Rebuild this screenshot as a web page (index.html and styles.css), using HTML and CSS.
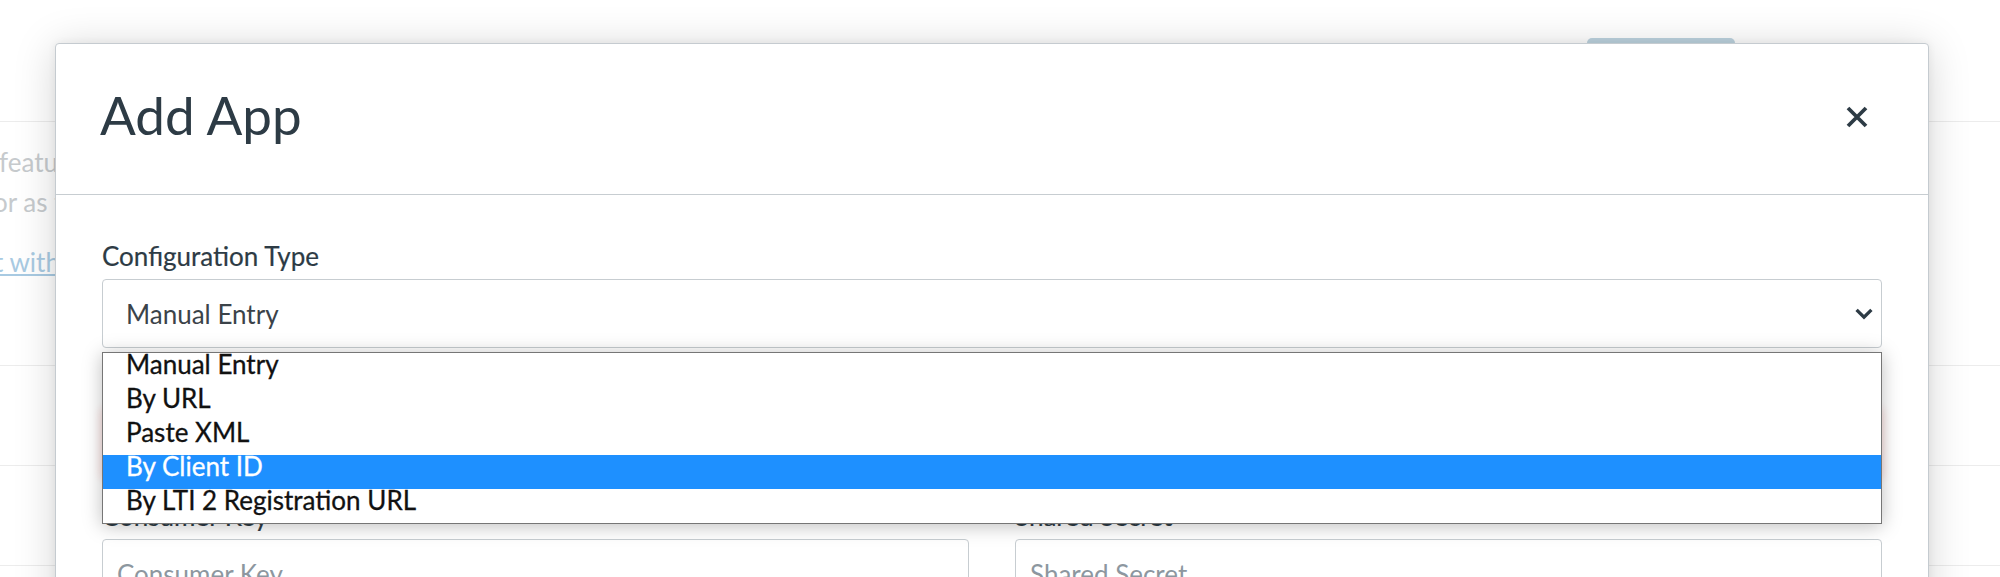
FILE: index.html
```html
<!DOCTYPE html>
<html lang="en">
<head>
<meta charset="utf-8">
<title>Add App</title>
<link rel="stylesheet" href="styles.css">
</head>
<body>
<div class="page" aria-hidden="true">
  <div class="page-bar"><span class="page-btn"></span></div>
  <div class="page-intro">
    <p class="page-text">features to Canvas that can be used in your courses</p>
    <p class="page-text line2">or as tools for your students.</p>
    <p class="page-text line3"><a class="page-link">t with Canvas</a></p>
  </div>
  <div class="page-row"></div>
  <div class="page-row"></div>
  <div class="page-row"></div>
</div>

<div class="modal" role="dialog" aria-labelledby="modal-title">
  <header class="modal-header">
    <h2 class="modal-title" id="modal-title">Add App</h2>
    <button class="close" type="button" aria-label="Close">
      <svg width="22" height="22" viewBox="0 0 22 22"><path d="M2 2 L20 20 M20 2 L2 20" fill="none" stroke="#2d3b45" stroke-width="3.8"/></svg>
    </button>
  </header>
  <div class="modal-body">
    <div class="field">
      <label class="label">Configuration Type</label>
      <div class="select-wrap">
        <div class="select">
          <span>Manual Entry</span>
          <svg class="chevron" width="18" height="12" viewBox="0 0 18 12"><path d="M1.6 1.8 L9 9.2 L16.4 1.8" fill="none" stroke="#2d3b45" stroke-width="3.3"/></svg>
        </div>
        <ul class="listbox" role="listbox">
          <li class="option" role="option">Manual Entry</li>
          <li class="option" role="option">By URL</li>
          <li class="option" role="option">Paste XML</li>
          <li class="option selected" role="option" aria-selected="true">By Client ID</li>
          <li class="option" role="option">By LTI 2 Registration URL</li>
        </ul>
      </div>
    </div>
    <div class="field">
      <label class="label">Name</label>
      <div class="input error"></div>
    </div>
    <div class="row">
      <div class="field">
        <label class="label">Consumer Key</label>
        <input class="input" placeholder="Consumer Key">
      </div>
      <div class="field">
        <label class="label">Shared Secret</label>
        <input class="input" placeholder="Shared Secret">
      </div>
    </div>
  </div>
</div>
</body>
</html>
```

FILE: styles.css
```css
html, body {
  margin: 0;
  padding: 0;
}
body {
  width: 2000px;
  height: 577px;
  overflow: hidden;
  background: #ffffff;
  font-family: Lato, "Open Sans", sans-serif;
  position: relative;
}

/* page behind the dialog (already dimmed by the overlay) */
.page {
  position: absolute;
  inset: 0;
  color: #c6cacd;
}
.page-bar {
  height: 121px;
  border-bottom: 1px solid #ececec;
  display: flex;
  justify-content: flex-end;
  padding-right: 265px;
}
.page-btn {
  display: block;
  width: 148px;
  height: 44px;
  margin-top: 38px;
  border-radius: 5px;
  background: #bed4e0;
}
.page-intro {
  height: 244px;
  border-bottom: 1px solid #ececec;
  padding-top: 20px;
  box-sizing: border-box;
}
.page-text {
  margin: 0;
  font-size: 26px;
  line-height: 40px;
  white-space: nowrap;
  margin-left: -1px;
}
.page-text.line2 {
  margin-left: -7px;
}
.page-text.line3 {
  margin-top: 20px;
  margin-left: -6px;
}
.page-link {
  color: #a8cae2;
  text-decoration: underline;
}
.page-row {
  height: 99px;
  border-bottom: 1px solid #ececec;
}

/* dialog */
.modal {
  position: absolute;
  left: 55px;
  top: 43px;
  width: 1874px;
  height: 640px;
  box-sizing: border-box;
  background: #ffffff;
  border: 1px solid #c5cbd0;
  border-radius: 4px;
  box-shadow: 0 4px 42px rgba(0, 0, 0, 0.17), 0 0 8px rgba(0, 0, 0, 0.06);
}
.modal-header {
  height: 151px;
  box-sizing: border-box;
  border-bottom: 1px solid #c7cdd1;
  padding: 0 61px 9px 44px;
  display: flex;
  align-items: center;
  justify-content: space-between;
}
.modal-title {
  margin: 0;
  font-size: 53px;
  line-height: 64px;
  font-weight: 400;
  color: #2d3b45;
}
.close {
  margin: 5px -1px 0 0;
  padding: 0;
  border: 0;
  background: none;
  width: 22px;
  height: 22px;
  display: block;
}
.close svg {
  display: block;
}

.modal-body {
  padding: 46px 46px 0 46px;
  display: flex;
  flex-direction: column;
  gap: 23px;
}
.field {
  display: flex;
  flex-direction: column;
}
.label {
  font-size: 26px;
  line-height: 30px;
  color: #2d3b45;
  margin-bottom: 8px;
  -webkit-text-stroke: 0.2px #2d3b45;
}
.select-wrap {
  position: relative;
}
.select {
  height: 69px;
  box-sizing: border-box;
  border: 1px solid #c7cdd1;
  border-radius: 4px;
  background: #ffffff;
  padding: 0 8px 0 23px;
  display: flex;
  align-items: center;
  justify-content: space-between;
  font-size: 26px;
  color: #3b4349;
}
.chevron {
  display: block;
}
.listbox {
  position: absolute;
  left: 0;
  right: 0;
  top: calc(100% + 4px);
  margin: 0;
  padding: 0;
  list-style: none;
  background: #ffffff;
  border: 1px solid #767676;
  box-shadow: 0 2px 18px rgba(0, 0, 0, 0.26);
  z-index: 2;
}
.option {
  height: 34px;
  box-sizing: border-box;
  padding-left: 23px;
  font-size: 26px;
  line-height: 23px;
  color: #111111;
  white-space: nowrap;
  -webkit-text-stroke: 0.3px #111111;
}
.option.selected {
  background: #1e90ff;
  color: #ffffff;
  -webkit-text-stroke: 0.3px #ffffff;
}

.input {
  height: 69px;
  box-sizing: border-box;
  border: 1px solid #c7cdd1;
  border-radius: 4px;
  background: #ffffff;
  padding: 0 14px;
  font-family: Lato, "Open Sans", sans-serif;
  font-size: 26px;
  color: #2d3b45;
  width: 100%;
  margin: 0;
}
.input::placeholder {
  color: #8d979f;
}
.input.error {
  border-color: #e8453c;
  box-shadow: 0 0 8px 1px rgba(230, 40, 30, 0.16);
}
.row {
  display: grid;
  grid-template-columns: 1fr 1fr;
  column-gap: 46px;
}
```
